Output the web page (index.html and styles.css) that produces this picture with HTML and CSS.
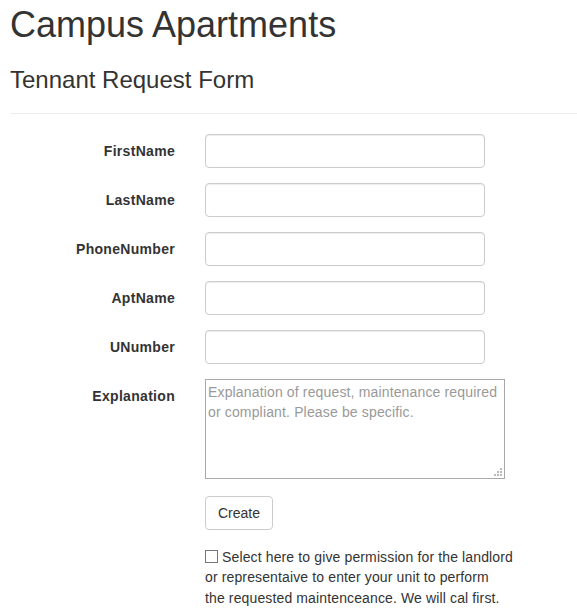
FILE: index.html
```html
<!DOCTYPE html>
<html>
<head>
<meta charset="utf-8">
<link rel="stylesheet" href="styles.css">
</head>
<body>
<div class="page">
  <h1 class="title">Campus Apartments</h1>
  <h3 class="subtitle">Tennant Request Form</h3>
  <hr class="rule">
  <form class="form">
    <label class="label">FirstName</label>
    <div class="field"><input class="control" type="text"></div>
    <label class="label">LastName</label>
    <div class="field"><input class="control" type="text"></div>
    <label class="label">PhoneNumber</label>
    <div class="field"><input class="control" type="text"></div>
    <label class="label">AptName</label>
    <div class="field"><input class="control" type="text"></div>
    <label class="label">UNumber</label>
    <div class="field"><input class="control" type="text"></div>
    <label class="label">Explanation</label>
    <div class="field">
      <div class="area-wrap">
        <textarea class="area" placeholder="Explanation of request, maintenance required or compliant. Please be specific."></textarea>
        <svg class="grip" width="10" height="10" viewBox="0 0 10 10" aria-hidden="true">
          <rect x="7" y="1" width="2" height="2" fill="#bbb"/>
          <rect x="4" y="4" width="2" height="2" fill="#bbb"/>
          <rect x="7" y="4" width="2" height="2" fill="#bbb"/>
          <rect x="1" y="7" width="2" height="2" fill="#bbb"/>
          <rect x="4" y="7" width="2" height="2" fill="#bbb"/>
          <rect x="7" y="7" width="2" height="2" fill="#bbb"/>
        </svg>
      </div>
    </div>
    <div class="field offset"><button class="btn" type="button">Create</button></div>
    <div class="field offset check-row">
      <p class="note"><input class="check" type="checkbox"> Select here to give permission for the landlord or representaive to enter your unit to perform<br>the requested maintenceance. We will cal first.</p>
    </div>
  </form>
</div>
</body>
</html>
```
FILE: styles.css
```css
* { box-sizing: border-box; }
html, body { margin: 0; padding: 0; background: #fff; }
body {
  font-family: "Liberation Sans", Arial, Helvetica, sans-serif;
  font-size: 14px;
  line-height: 20px;
  color: #333;
}
.page { padding-left: 10px; }
.title {
  font-size: 36px;
  font-weight: 500;
  line-height: 1.1;
  margin: 5px 0 10px;
}
.subtitle {
  font-size: 24px;
  font-weight: 500;
  line-height: 1.1;
  margin: 22px 0 10px;
}
.rule {
  border: 0;
  border-top: 1px solid #eee;
  margin: 20px 0 20px;
  height: 0;
}
.form {
  display: grid;
  grid-template-columns: 165px 1fr;
  column-gap: 30px;
  row-gap: 15px;
}
.label {
  text-align: right;
  font-weight: bold;
  letter-spacing: 0.3px;
  padding-top: 7px;
}
.field { min-width: 0; }
.offset { grid-column: 2; }
.control {
  display: block;
  width: 280px;
  height: 34px;
  padding: 6px 12px;
  font: inherit;
  color: #555;
  background: #fff;
  border: 1px solid #ccc;
  border-radius: 4px;
  box-shadow: inset 0 1px 1px rgba(0,0,0,.075);
}
.area-wrap {
  position: relative;
  width: 300px;
  height: 100px;
}
.area {
  display: block;
  width: 300px;
  height: 100px;
  margin: 0;
  padding: 2px;
  resize: none;
  font-family: "Liberation Sans", Arial, sans-serif;
  font-size: 14px;
  letter-spacing: 0.15px;
  line-height: 20px;
  border: 1px solid #a9a9a9;
  border-radius: 0;
  color: #333;
  background: #fff;
}
.area::placeholder { color: #999; }
.grip {
  position: absolute;
  right: 2px;
  bottom: 2px;
}
.btn {
  display: inline-block;
  margin-top: 2px;
  height: 34px;
  padding: 6px 12px;
  font: inherit;
  color: #333;
  background: #fff;
  border: 1px solid #ccc;
  border-radius: 4px;
}
.check-row { margin-top: 2px; }
.note {
  margin: 0;
  width: 315px;
  line-height: 20.5px;
  letter-spacing: 0.13px;
}
.check {
  -webkit-appearance: none;
  appearance: none;
  display: inline-block;
  width: 13px;
  height: 13px;
  margin: 0;
  border: 1px solid #767676;
  border-radius: 0;
  background: #fff;
  vertical-align: -1px;
}
```
